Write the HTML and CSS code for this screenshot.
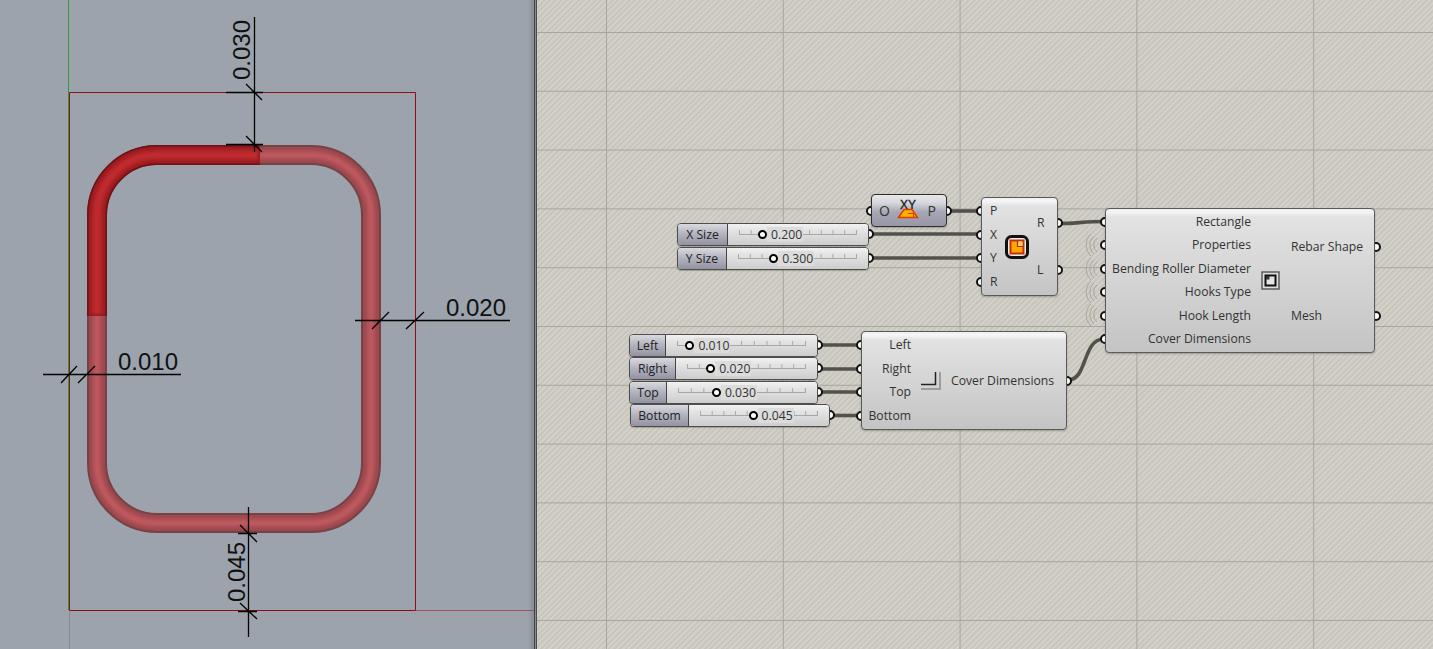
FILE: index.html
```html
<!DOCTYPE html>
<html lang="en">
<head>
<meta charset="utf-8">
<title>Rebar cover dimensions</title>
<link rel="stylesheet" href="styles.css">
</head>
<body>
<main class="app">
  <section class="viewport">
    <svg class="scene" width="534" height="649" viewBox="0 0 534 649">
      <defs>
        <filter id="soft" x="-10%" y="-10%" width="120%" height="120%"><feGaussianBlur stdDeviation="1.4"/></filter>
      </defs>
      <path class="ax-grey" d="M69.5 611V649"/>
      <path class="ax-green" d="M68.5 0V610"/>
      <path class="bx-red" d="M69.5 92.5H415.5V610.5H69.5Z"/>
      <path class="bx-fade" d="M416 610.5H534"/>

      <rect class="t p1" x="97" y="155" width="274" height="368" rx="60"/>
      <rect class="t p2" x="97" y="155" width="274" height="368" rx="60"/>
      <g filter="url(#soft)"><rect class="t p3" x="97" y="155" width="274" height="368" rx="60"/>
      <rect class="t p4" x="97" y="155" width="274" height="368" rx="60"/></g>

      <path class="t r1" d="M97 316V215A60 60 0 0 1 157 155H260"/>
      <path class="t r2" d="M97 316V215A60 60 0 0 1 157 155H260"/>
      <g filter="url(#soft)">
        <path class="t r3" d="M97 314V215A60 60 0 0 1 157 155H258"/>
        <path class="t r4" d="M97 314V215A60 60 0 0 1 157 155H258"/>
      </g>

      <g class="dim">
        <path d="M254.5 17V152M226 92.5H263M226 144.5H263M246 84L262 100M246 136L262 152"/>
        <path d="M43 374.5H181M61 383L77 366M78 383L95 366"/>
        <path d="M355 320.5H510M372 329L389 312M406 329L424 312"/>
        <path d="M248.5 507V637M238 533.5H257M238 611.5H257M240 525L257 542M240 603L257 619"/>
      </g>
      <text class="dim-text" transform="translate(250 80) rotate(-90)">0.030</text>
      <text class="dim-text" x="118" y="370">0.010</text>
      <text class="dim-text" x="446" y="316">0.020</text>
      <text class="dim-text" transform="translate(245 602) rotate(-90)">0.045</text>
    </svg>
  </section>

  <div class="divider"></div>

  <section class="canvas">
    <svg class="wires" width="896" height="649" viewBox="537 0 896 649">
      <g class="wire">
        <path d="M949 211H981"/>
        <path d="M869 234H981"/>
        <path d="M869 258H981"/>
        <path d="M1060 223.500C1075 223.500 1085 221.500 1105 221.500"/>
        <path d="M818 345H861"/>
        <path d="M818 369H861"/>
        <path d="M818 392H861"/>
        <path d="M830 415.500H861"/>
        <path d="M1068 380C1088 380 1082 339 1104 339"/>
      </g>
      <g class="hint">
        <path d="M1097 238A9 9 0 0 0 1097 252M1094 236A12 12 0 0 0 1094 254M1091 234A15 15 0 0 0 1091 256"/>
        <path d="M1097 262A9 9 0 0 0 1097 276M1094 260A12 12 0 0 0 1094 278M1091 258A15 15 0 0 0 1091 280"/>
        <path d="M1097 285A9 9 0 0 0 1097 299M1094 283A12 12 0 0 0 1094 301M1091 281A15 15 0 0 0 1091 303"/>
        <path d="M1097 308A9 9 0 0 0 1097 322M1094 306A12 12 0 0 0 1094 324M1091 304A15 15 0 0 0 1091 326"/>
      </g>
    </svg>

    <!-- Deconstruct point -->
    <article class="node node-dark n-point">
      <div class="col in"><div class="row"><i class="port"></i>O</div></div>
      <svg class="ic-xy" width="24" height="26" viewBox="0 0 24 26">
        <text class="xy" x="12" y="11">XY</text>
        <path d="M8 11.500H16L21.500 19.500H2.500Z" fill="#ffb300" stroke="#e23a00" stroke-width="1.500"/>
        <path d="M12 15.500H17.500V19.500" fill="none" stroke="#e23a00"/>
      </svg>
      <div class="col out"><div class="row"><i class="port"></i>P</div></div>
    </article>

    <!-- Rectangle -->
    <article class="node n-rect">
      <div class="col in">
        <div class="row"><i class="port"></i>P</div>
        <div class="row"><i class="port"></i>X</div>
        <div class="row"><i class="port"></i>Y</div>
        <div class="row"><i class="port"></i>R</div>
      </div>
      <svg class="ic" width="24" height="24" viewBox="0 0 24 24">
        <rect x="1.500" y="1.500" width="21" height="21" rx="5" fill="#ececec" stroke="#111" stroke-width="3"/>
        <rect x="5.500" y="5.500" width="13" height="13" fill="#ffa800" stroke="#c2300c" stroke-width="2"/>
        <path d="M12.500 6.500H17.500V11.500H12.500Z" fill="#ffd070"/>
        <path d="M12.500 6V11.500H18" fill="none" stroke="#b02a08" stroke-width="1.200"/>
      </svg>
      <div class="col out">
        <div class="row"><i class="port"></i>R</div>
        <div class="row"><i class="port"></i>L</div>
      </div>
    </article>

    <!-- Rebar shape -->
    <article class="node n-rebar">
      <div class="col in">
        <div class="row"><i class="port"></i>Rectangle</div>
        <div class="row"><i class="port"></i>Properties</div>
        <div class="row"><i class="port"></i>Bending Roller Diameter</div>
        <div class="row"><i class="port"></i>Hooks Type</div>
        <div class="row"><i class="port"></i>Hook Length</div>
        <div class="row"><i class="port"></i>Cover Dimensions</div>
      </div>
      <svg class="ic" width="19" height="19" viewBox="0 0 19 19">
        <rect x="1" y="1" width="17" height="17" fill="#ddd" stroke="#5c5c5c" stroke-width="1.500"/>
        <rect x="4.500" y="4.500" width="10" height="10" fill="#e4e4e4" stroke="#111" stroke-width="2"/>
        <path d="M5 5H8.500V8.500H5Z" fill="#333"/>
      </svg>
      <div class="col out">
        <div class="row"><i class="port"></i>Rebar Shape</div>
        <div class="row"><i class="port"></i>Mesh</div>
      </div>
    </article>

    <!-- Cover dimensions -->
    <article class="node n-cover">
      <div class="col in">
        <div class="row"><i class="port"></i>Left</div>
        <div class="row"><i class="port"></i>Right</div>
        <div class="row"><i class="port"></i>Top</div>
        <div class="row"><i class="port"></i>Bottom</div>
      </div>
      <svg class="ic" width="21" height="20" viewBox="0 0 21 20">
        <path d="M1 13.500H15.500V1" fill="none" stroke="#222" stroke-width="1.500"/>
        <path d="M1 18H20V1" fill="none" stroke="#8b8b8b" stroke-width="1.500"/>
      </svg>
      <div class="col out"><div class="row"><i class="port"></i>Cover Dimensions</div></div>
    </article>

    <!-- Sliders -->
    <article class="slider s-x">
      <div class="s-name">X Size</div>
      <div class="s-track"><div class="rail"><div class="thumb" style="left:20%"><b></b><span>0.200</span></div></div></div>
      <i class="port"></i>
    </article>
    <article class="slider s-y">
      <div class="s-name">Y Size</div>
      <div class="s-track"><div class="rail"><div class="thumb" style="left:30%"><b></b><span>0.300</span></div></div></div>
      <i class="port"></i>
    </article>
    <article class="slider s-left">
      <div class="s-name">Left</div>
      <div class="s-track"><div class="rail"><div class="thumb" style="left:10%"><b></b><span>0.010</span></div></div></div>
      <i class="port"></i>
    </article>
    <article class="slider s-right">
      <div class="s-name">Right</div>
      <div class="s-track"><div class="rail"><div class="thumb" style="left:20%"><b></b><span>0.020</span></div></div></div>
      <i class="port"></i>
    </article>
    <article class="slider s-top">
      <div class="s-name">Top</div>
      <div class="s-track"><div class="rail"><div class="thumb" style="left:30%"><b></b><span>0.030</span></div></div></div>
      <i class="port"></i>
    </article>
    <article class="slider s-bottom">
      <div class="s-name">Bottom</div>
      <div class="s-track"><div class="rail"><div class="thumb" style="left:45%"><b></b><span>0.045</span></div></div></div>
      <i class="port"></i>
    </article>
  </section>
</main>
</body>
</html>
```
FILE: styles.css
```css
* { box-sizing: border-box; }
html, body { margin: 0; height: 100%; overflow: hidden; }
body { font-family: "Open Sans", "Noto Sans", "Liberation Sans", sans-serif; font-size: 12.2px; color: #333; }

.app { display: flex; width: 1433px; height: 649px; }

/* Rhino viewport */
.viewport { flex: none; width: 534px; height: 649px; background: linear-gradient(90deg, #9ca3ac 0, #9ca3ac 528px, #868c95 534px); }
.scene { display: block; }
.ax-grey { stroke: #858b93; fill: none; }
.ax-green { stroke: #2f9a3a; stroke-width: 1; fill: none; }
.bx-red { stroke: #8c0f18; fill: none; }
.bx-fade { stroke: #a84f54; fill: none; }
.t { fill: none; }
.p1 { stroke: #774246; stroke-width: 20; }
.p2 { stroke: #98474c; stroke-width: 16; }
.p3 { stroke: #aa4e54; stroke-width: 11; }
.p4 { stroke: #bf5a60; stroke-width: 5; }
.r1 { stroke: #6e1216; stroke-width: 20; }
.r2 { stroke: #951a1e; stroke-width: 17; }
.r3 { stroke: #ad2125; stroke-width: 12; }
.r4 { stroke: #c02a2e; stroke-width: 6; }
.dim path { stroke: #000; stroke-width: 1.3; fill: none; }
.dim-text { font-family: "Liberation Sans", Arial, sans-serif; font-size: 24px; fill: #111; }

.divider { flex: none; width: 3px; height: 649px; background: linear-gradient(90deg, #444 0, #444 1px, #8a8a8a 1px, #8a8a8a 2px, #4d4d4d 2px); }

/* Grasshopper canvas */
.canvas {
  position: relative;
  isolation: isolate;
  flex: none;
  width: 896px;
  height: 649px;
  overflow: hidden;
  background-color: #cdcac3;
  background-image:
    linear-gradient(90deg, #a8a59e 1px, transparent 1px),
    linear-gradient(#a8a59e 1px, transparent 1px),
    repeating-linear-gradient(-45deg, #d3d0c9 0, #d3d0c9 2px, #c8c5bd 2px, #c8c5bd 4px);
  background-size: 176.8px 100%, 100% 58.8px, auto;
  background-position: 69px 0, 0 32px, 0 0;
}
.wires { position: absolute; left: 0; top: 0; z-index: -2; }
.wire path { fill: none; stroke: #52524a; stroke-width: 3.6; }
.hint path { fill: none; stroke: #a9a69f; stroke-width: 1; }

.node {
  position: absolute;
  display: flex;
  align-items: stretch;
  border: 1px solid #5a5a5a;
  border-radius: 4px;
  background: linear-gradient(#f0f0f0 0, #f6f6f6 3px, #e2e2e2 8px, #c4c4c4 100%);
  box-shadow: 0 1px 2px rgba(60, 60, 50, .35);
}
.node-dark {
  border-color: #2e2e2e;
  background: linear-gradient(#e8e8ea 0, #d6d6dc 8px, #a6a6b4 55%, #9797a7 100%);
}
.col { display: flex; flex-direction: column; justify-content: space-around; }
.row { position: relative; white-space: nowrap; line-height: 16px; }
.port {
  position: absolute;
  z-index: -1;
  top: 3px;
  width: 10px;
  height: 10px;
  border: 2.5px solid #111;
  border-radius: 50%;
  background: #fff;
}
.in .port { left: -6px; }
.out .port { right: -6px; }
.ic { flex: none; align-self: center; }
.ic-xy { flex: none; align-self: center; }
.xy { font-family: "Liberation Sans", Arial, sans-serif; font-size: 12px; text-anchor: middle; fill: #222; stroke: #222; stroke-width: .35; }

.n-point { left: 334px; top: 194px; width: 76px; height: 33px; }
.n-point .in { flex: 1; padding-left: 7px; font-size: 14px; }
.n-point .out { flex: 1; align-items: flex-end; padding-right: 10px; font-size: 14px; }
.n-point .in .row, .n-point .out .row { width: 100%; }
.n-point .in .port { left: -13px; }
.n-point .out { text-align: right; }
.n-point .out .port { right: -16px; }

.n-rect { left: 444px; top: 197px; width: 77px; height: 99px; }
.n-rect .in { width: 23px; padding: 1px 0 1px 8px; }
.n-rect .in .port { left: -14px; }
.n-rect .out { flex: 1; padding: 1px 10px 2px 8px; }
.n-rect .out .port { right: -16px; }

.n-rebar { left: 568px; top: 208px; width: 270px; height: 145px; }
.n-rebar .in { flex: none; width: 145px; text-align: right; padding: 1px 0; }
.n-rebar .ic { margin-left: 10px; }
.n-rebar .out { flex: 1; padding: 3px 12px 1px 11px; }
.n-rebar .out .port { right: -18px; }

.n-cover { left: 324px; top: 331px; width: 206px; height: 99px; }
.n-cover .in { flex: none; width: 49px; text-align: right; padding: 1px 0; }
.n-cover .ic { margin-left: 9px; }
.n-cover .out { flex: 1; padding: 0 12px 0 10px; }
.n-cover .out .port { right: -18px; }

/* Number sliders */
.slider {
  position: absolute;
  display: flex;
  height: 23px;
  border: 1px solid #4e4e4e;
  border-radius: 4px;
  box-shadow: 0 1px 1px rgba(60, 60, 50, .3);
  background: #ddd;
}
.s-name {
  flex: none;
  text-align: center;
  line-height: 21px;
  color: #222;
  background: linear-gradient(#d9d9df 0, #b5b5c1 45%, #9292a2 100%);
  border-right: 1px solid #444;
  border-radius: 3px 0 0 3px;
}
.s-track {
  flex: 1;
  display: flex;
  align-items: center;
  padding: 0 11px;
  border-radius: 0 3px 3px 0;
  background: linear-gradient(#f2f2f2 0, #e6e6e6 25%, #cdcdcd 100%);
}
.rail { position: relative; flex: 1; height: 1px; background: #a8a8a8; }
.rail::before {
  content: "";
  position: absolute;
  left: 0;
  right: 0;
  bottom: 0;
  height: 5px;
  background-image: linear-gradient(90deg, #a8a8a8 1px, transparent 1px);
  background-size: 10% 100%;
  border-right: 1px solid #a8a8a8;
}
.thumb {
  position: absolute;
  top: -8px;
  margin-left: -4.5px;
  display: flex;
  align-items: center;
  gap: 0;
  height: 17px;
  white-space: nowrap;
}
.thumb b { flex: none; width: 9px; height: 9px; border: 2.5px solid #000; border-radius: 50%; background: #fff; }
.thumb span { padding: 1px 1px 0 4px; line-height: 14px; background: #dcdcdc; }
.slider > .port { position: absolute; z-index: -1; right: -6px; top: 5px; }

.s-x { left: 140px; top: 223px; width: 192px; }
.s-x .s-name { width: 50px; }
.s-y { left: 140px; top: 247px; width: 192px; }
.s-y .s-name { width: 49px; }
.s-left { left: 92px; top: 334px; width: 189px; }
.s-left .s-name { width: 36px; }
.s-right { left: 92px; top: 357px; width: 189px; }
.s-right .s-name { width: 46px; }
.s-top { left: 92px; top: 381px; width: 189px; }
.s-top .s-name { width: 37px; }
.s-bottom { left: 93px; top: 404px; width: 200px; }
.s-bottom .s-name { width: 58px; }
```
